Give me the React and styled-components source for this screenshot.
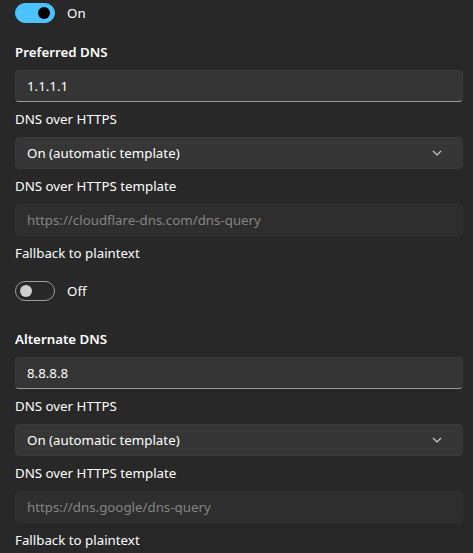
import React from "react";
import styled, { createGlobalStyle } from "styled-components";

const sections = [
  {
    title: "Preferred DNS",
    address: "1.1.1.1",
    mode: "On (automatic template)",
    template: "https://cloudflare-dns.com/dns-query",
    fallback: false,
  },
  {
    title: "Alternate DNS",
    address: "8.8.8.8",
    mode: "On (automatic template)",
    template: "https://dns.google/dns-query",
    fallback: false,
  },
];

const Toggle = ({ on, label }) => (
  <ToggleRow>
    <ToggleTrack on={on}>
      <ToggleKnob on={on} />
    </ToggleTrack>
    <ToggleLabel>{label}</ToggleLabel>
  </ToggleRow>
);

const Chevron = () => (
  <svg width="10" height="6" viewBox="0 0 10 6">
    <path d="M1 1 L5 5 L9 1" fill="none" stroke="#cfcfcf" strokeWidth="1.1" />
  </svg>
);

const App = () => {
  return (
    <Wrapper>
      <GlobalStyle />
      <Toggle on label="On" />
      {sections.map((item, index) => (
        <Section key={index}>
          <Field>
            <Heading>{item.title}</Heading>
            <TextBox>{item.address}</TextBox>
          </Field>
          <Field>
            <Label>DNS over HTTPS</Label>
            <Select>
              <span>{item.mode}</span>
              <Chevron />
            </Select>
          </Field>
          <Field>
            <Label>DNS over HTTPS template</Label>
            <TextBox disabled>{item.template}</TextBox>
          </Field>
          <Label>Fallback to plaintext</Label>
          <FallbackToggle>
            <Toggle on={item.fallback} label={item.fallback ? "On" : "Off"} />
          </FallbackToggle>
        </Section>
      ))}
    </Wrapper>
  );
};

const GlobalStyle = createGlobalStyle`
  html, body {
    margin: 0;
    background-color: #282828;
  }
  body {
    font-family: "Noto Sans", "Open Sans", sans-serif;
    color: #ffffff;
  }
`;

const Wrapper = styled.div`
  padding: 3px 10px 40px 15px;
  display: flex;
  flex-direction: column;
  gap: 19px;
`;
const Section = styled.div`
  display: flex;
  flex-direction: column;
  gap: 7px;
  & + & {
    margin-top: 9px;
  }
`;
const Field = styled.div`
  display: flex;
  flex-direction: column;
  gap: 8px;
`;
const Label = styled.div`
  font-size: 13.3px;
  line-height: 20px;
  height: 20px;
  color: #ffffff;
`;
const Heading = styled(Label)`
  font-weight: 600;
`;
const TextBox = styled.div`
  box-sizing: border-box;
  height: 32px;
  padding: 0 11px;
  display: flex;
  align-items: center;
  font-size: 13.3px;
  border-radius: 4px;
  color: ${(props) => (props.disabled ? "#858585" : "#ffffff")};
  background-color: ${(props) => (props.disabled ? "#2e2e2e" : "#353535")};
  border: 1px solid ${(props) => (props.disabled ? "#333333" : "#3a3a3a")};
  border-bottom-color: ${(props) => (props.disabled ? "#333333" : "#9a9a9a")};
`;
const Select = styled.div`
  box-sizing: border-box;
  height: 32px;
  padding: 0 20px 0 11px;
  display: flex;
  align-items: center;
  justify-content: space-between;
  font-size: 13.3px;
  border-radius: 4px;
  background-color: #363636;
  border: 1px solid #3a3a3a;
`;
const FallbackToggle = styled.div`
  margin-top: 11px;
`;
const ToggleRow = styled.div`
  display: flex;
  align-items: center;
  gap: 12px;
  height: 20px;
`;
const ToggleTrack = styled.div`
  box-sizing: border-box;
  width: 40px;
  height: 20px;
  border-radius: 10px;
  display: flex;
  align-items: center;
  padding: 0 4px;
  justify-content: ${(props) => (props.on ? "flex-end" : "flex-start")};
  background-color: ${(props) => (props.on ? "#4cc2ff" : "transparent")};
  border: 1px solid ${(props) => (props.on ? "#4cc2ff" : "#9d9d9d")};
`;
const ToggleKnob = styled.div`
  width: 12px;
  height: 12px;
  border-radius: 50%;
  background-color: ${(props) => (props.on ? "#000000" : "#cecece")};
`;
const ToggleLabel = styled.div`
  font-size: 13.3px;
  color: #ffffff;
`;

export default App;
